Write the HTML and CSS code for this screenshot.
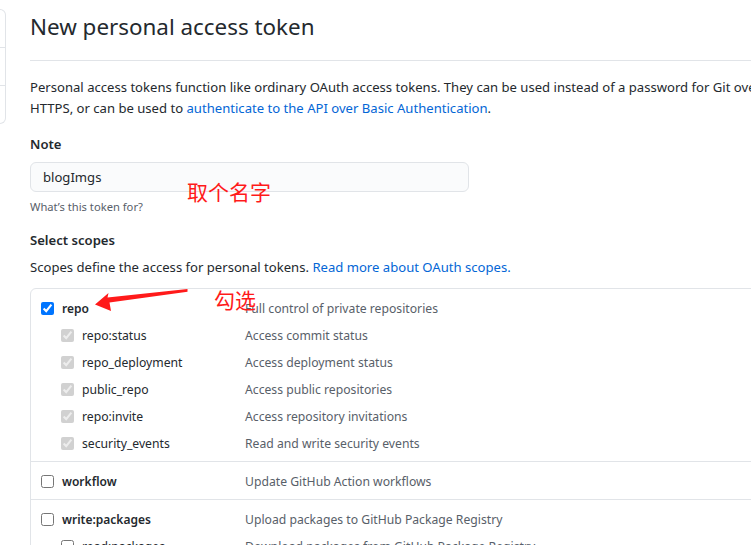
FILE: index.html
```html
<!DOCTYPE html>
<html lang="en">
<head>
<meta charset="utf-8">
<title>New personal access token</title>
<link rel="stylesheet" href="styles.css">
</head>
<body>
<div class="page">
  <nav class="sidebar">
    <div class="side-item"></div>
    <div class="side-item"></div>
    <div class="side-item"></div>
  </nav>
  <main class="content">
    <h1 class="title">New personal access token</h1>
    <p class="intro">Personal access tokens function like ordinary OAuth access tokens. They can be used instead of a password for Git over HTTPS, or can be used to <a href="#">authenticate to the API over Basic Authentication</a>.</p>

    <div class="field">
      <label class="field-label">Note</label>
      <div class="input">blogImgs</div>
      <p class="hint">What’s this token for?</p>
    </div>

    <div class="field">
      <div class="field-label">Select scopes</div>
      <p class="scopes-desc">Scopes define the access for personal tokens. <a href="#">Read more about OAuth scopes.</a></p>
    </div>

    <div class="scopes">
      <div class="group">
        <div class="row top">
          <input type="checkbox" checked>
          <span class="name">repo</span>
          <span class="desc">Full control of private repositories</span>
        </div>
        <div class="row sub">
          <input type="checkbox" checked disabled>
          <span class="name">repo:status</span>
          <span class="desc">Access commit status</span>
        </div>
        <div class="row sub">
          <input type="checkbox" checked disabled>
          <span class="name">repo_deployment</span>
          <span class="desc">Access deployment status</span>
        </div>
        <div class="row sub">
          <input type="checkbox" checked disabled>
          <span class="name">public_repo</span>
          <span class="desc">Access public repositories</span>
        </div>
        <div class="row sub">
          <input type="checkbox" checked disabled>
          <span class="name">repo:invite</span>
          <span class="desc">Access repository invitations</span>
        </div>
        <div class="row sub">
          <input type="checkbox" checked disabled>
          <span class="name">security_events</span>
          <span class="desc">Read and write security events</span>
        </div>
      </div>
      <div class="group">
        <div class="row top">
          <input type="checkbox">
          <span class="name">workflow</span>
          <span class="desc">Update GitHub Action workflows</span>
        </div>
      </div>
      <div class="group">
        <div class="row top">
          <input type="checkbox">
          <span class="name">write:packages</span>
          <span class="desc">Upload packages to GitHub Package Registry</span>
        </div>
        <div class="row sub">
          <input type="checkbox">
          <span class="name">read:packages</span>
          <span class="desc">Download packages from GitHub Package Registry</span>
        </div>
      </div>
    </div>
  </main>
</div>

<span class="note note-name">取个名字</span>
<span class="note note-check">勾选</span>
<svg class="arrow" width="751" height="545" viewBox="0 0 751 545">
  <polygon points="95,304.5 108.5,293 107.5,297.5 187.5,289 187.5,291.8 109.5,302.5 111,311" fill="#ff1a1a"/>
</svg>
</body>
</html>
```
FILE: styles.css
```css
html, body {
  margin: 0;
  padding: 0;
  background: #ffffff;
  overflow: hidden;
}
body {
  width: 751px;
  height: 545px;
  position: relative;
  font-family: "Noto Sans", "Segoe UI", sans-serif;
  font-size: 13.1px;
  color: #24292e;
}
.page {
  display: flex;
  align-items: flex-start;
}
.sidebar {
  flex: none;
  width: 5px;
  margin-top: 9px;
  border: 1px solid #e1e4e8;
  border-left: none;
  border-radius: 0 6px 6px 0;
  display: flex;
  flex-direction: column;
}
.side-item {
  height: 37px;
  border-top: 1px solid #e1e4e8;
}
.side-item:first-child {
  border-top: none;
}
.content {
  flex: none;
  width: 750px;
  margin-left: 24px;
}
.title {
  margin: 0;
  padding: 12px 0 18px;
  font-size: 22.4px;
  line-height: 30px;
  font-weight: 400;
  border-bottom: 1px solid #e1e4e8;
}
.intro {
  margin: 16px 0 15px;
  line-height: 21px;
}
a {
  color: #0366d6;
  text-decoration: none;
}
.field-label {
  display: block;
  font-weight: 600;
  line-height: 21px;
}
.input {
  margin-top: 7px;
  width: 413px;
  height: 28px;
  padding: 0 12px;
  line-height: 28px;
  background: #fafbfc;
  border: 1px solid #e1e4e8;
  border-radius: 6px;
}
.hint {
  margin: 6px 0 14px;
  font-size: 11.2px;
  line-height: 18px;
  color: #586069;
}
.scopes-desc {
  margin: 6px 0 10px;
  line-height: 21px;
}
.scopes {
  border: 1px solid #e1e4e8;
  border-radius: 6px;
  font-size: 12.2px;
}
.group {
  padding: 6px 0 4px;
  border-top: 1px solid #e1e4e8;
}
.group:first-child {
  border-top: none;
}
.row {
  display: flex;
  align-items: center;
  height: 27px;
}
.row input {
  margin: 0 8px 0 0;
  width: 13px;
  height: 13px;
  flex: none;
}
.row.top {
  padding-left: 10px;
}
.row.sub {
  padding-left: 30px;
}
.name {
  flex: none;
}
.top .name {
  width: 183px;
  font-weight: 600;
  font-size: 12px;
}
.sub .name {
  width: 163px;
}
.desc {
  color: #586069;
}
.note {
  position: absolute;
  color: #ff1a1a;
  font-family: "Noto Sans CJK SC", sans-serif;
  font-size: 21px;
  line-height: 24px;
}
.note-name {
  left: 187px;
  top: 179px;
}
.note-check {
  left: 214px;
  top: 287px;
}
.arrow {
  position: absolute;
  left: 0;
  top: 0;
  pointer-events: none;
}
```
